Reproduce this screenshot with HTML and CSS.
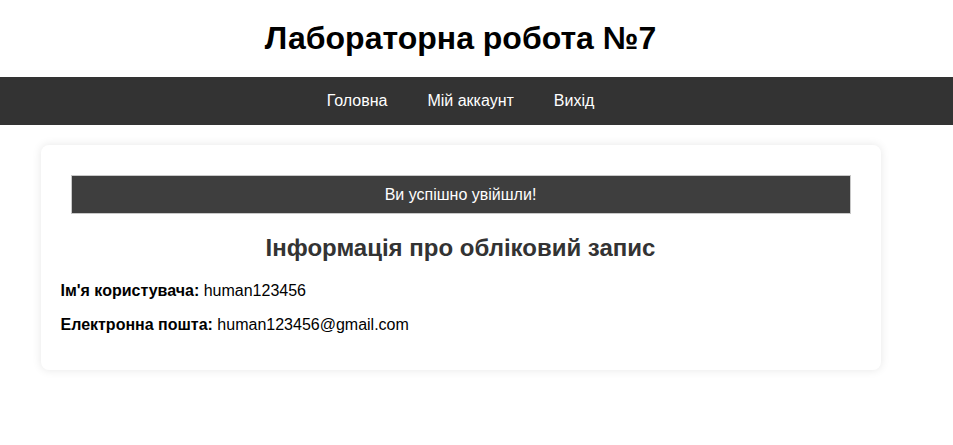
FILE: index.html
```html
<!DOCTYPE html>
<html lang="uk">
<head>
<meta charset="utf-8">
<title>Лабораторна робота №7</title>
<link rel="stylesheet" href="styles.css">
</head>
<body>
<header class="site-header">
  <div class="wrap">
    <h1 class="site-title">Лабораторна робота №7</h1>
  </div>
</header>
<nav class="site-nav">
  <div class="wrap nav-links">
    <a href="#" class="nav-link">Головна</a>
    <a href="#" class="nav-link">Мій аккаунт</a>
    <a href="#" class="nav-link">Вихід</a>
  </div>
</nav>
<div class="wrap">
  <main class="card">
    <div class="alert">Ви успішно увійшли!</div>
    <h2 class="card-title">Інформація про обліковий запис</h2>
    <p class="info"><strong>Ім'я користувача:</strong> human123456</p>
    <p class="info"><strong>Електронна пошта:</strong> human123456@gmail.com</p>
  </main>
</div>
</body>
</html>
```
FILE: styles.css
```css
html, body {
  margin: 0;
  padding: 0;
  background: #fff;
  font-family: "Liberation Sans", Arial, sans-serif;
  color: #000;
}

.wrap {
  width: 921px;
}

.site-header {
  padding: 20px 0;
}

.site-title {
  margin: 0;
  text-align: center;
  font-size: 32px;
  font-weight: bold;
}

.site-nav {
  background: #333;
}

.nav-links {
  display: flex;
  justify-content: center;
}

.nav-link {
  color: #fff;
  text-decoration: none;
  font-size: 16px;
  padding: 15px 20px;
  line-height: 18px;
}

.card {
  display: block;
  box-sizing: content-box;
  max-width: 800px;
  margin: 20px auto;
  padding: 20px;
  background: #fff;
  border-radius: 8px;
  box-shadow: 0 0 10px rgba(0, 0, 0, 0.1);
}

.alert {
  margin: 10px;
  padding: 10px;
  background: #3e3e3e;
  border: 1px solid #c8c8c8;
  color: #fff;
  text-align: center;
  font-size: 16px;
  line-height: 17px;
}

.card-title {
  margin: 20px 0;
  text-align: center;
  font-size: 24px;
  color: #333;
}

.info {
  margin: 16px 0;
  font-size: 16px;
  line-height: 18px;
}
```
